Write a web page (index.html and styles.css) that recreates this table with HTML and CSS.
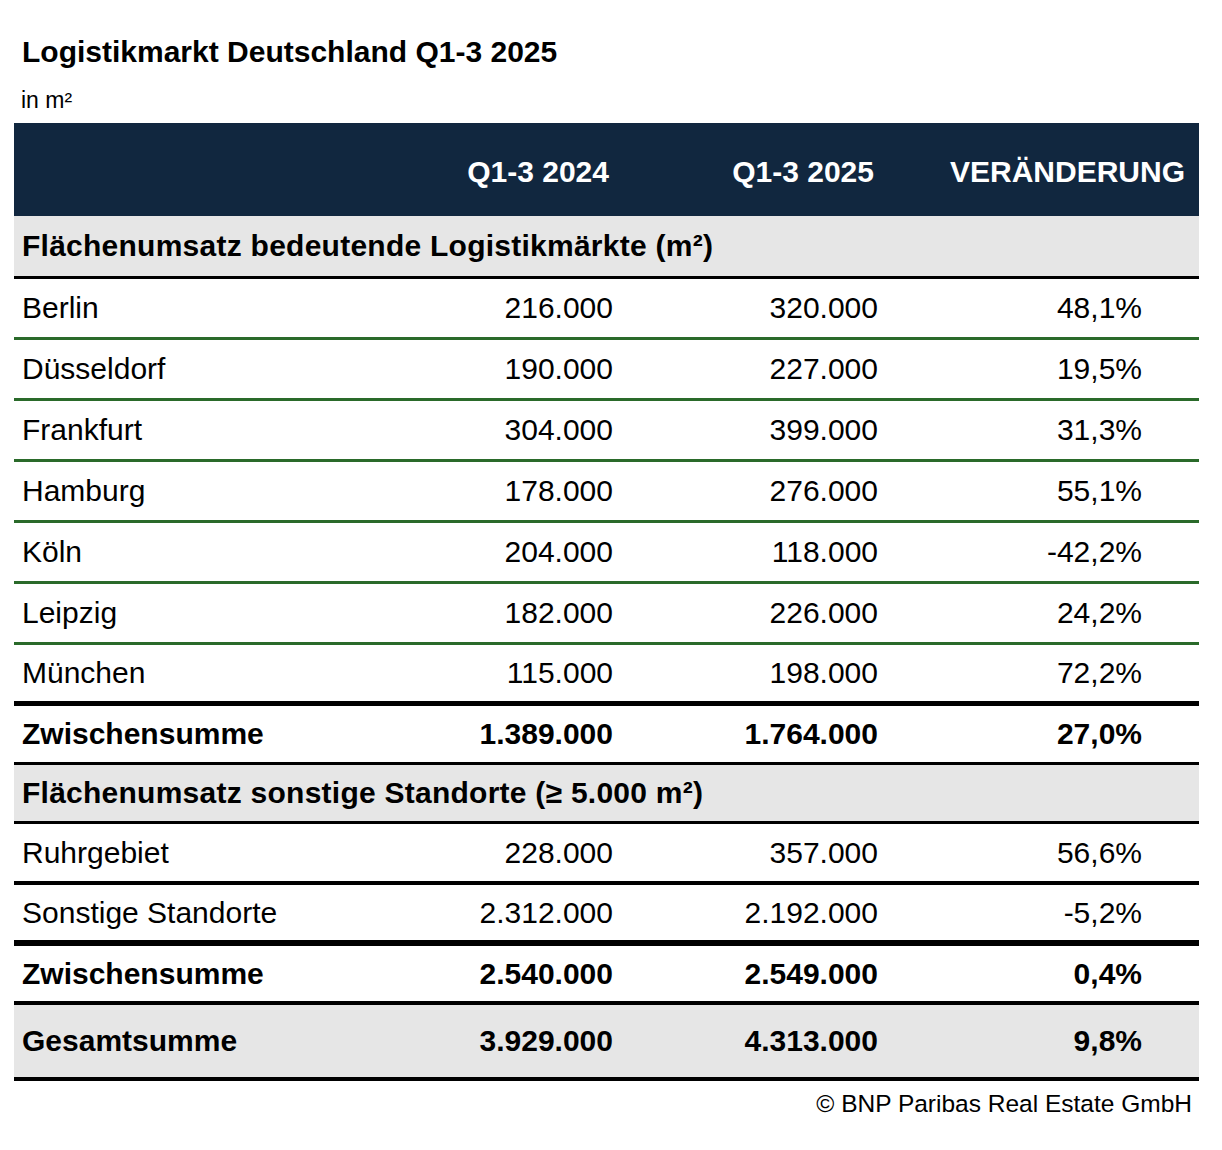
FILE: index.html
```html
<!DOCTYPE html>
<html lang="de">
<head>
    <meta charset="UTF-8">
    <meta name="viewport" content="width=device-width, initial-scale=1.0">
    <title>Logistikmarkt Deutschland Q1-3 2025</title>
    <link rel="stylesheet" href="styles.css">
</head>
<body>
    <div class="container">
        <h1 class="title">Logistikmarkt Deutschland Q1-3 2025</h1>
        <div class="unit">in m²</div>

        <table class="market-table">
            <colgroup>
                <col class="col-label">
                <col class="col-prev">
                <col class="col-curr">
                <col class="col-change">
            </colgroup>
            <thead>
                <tr class="head-row">
                    <th></th>
                    <th class="num">Q1-3 2024</th>
                    <th class="num">Q1-3 2025</th>
                    <th class="num change">VERÄNDERUNG</th>
                </tr>
            </thead>
            <tbody>
                <tr class="section-row">
                    <td colspan="4">Flächenumsatz bedeutende Logistikmärkte (m²)</td>
                </tr>
                <tr class="city-row">
                    <td>Berlin</td><td class="num">216.000</td><td class="num">320.000</td><td class="num change">48,1%</td>
                </tr>
                <tr class="city-row">
                    <td>Düsseldorf</td><td class="num">190.000</td><td class="num">227.000</td><td class="num change">19,5%</td>
                </tr>
                <tr class="city-row">
                    <td>Frankfurt</td><td class="num">304.000</td><td class="num">399.000</td><td class="num change">31,3%</td>
                </tr>
                <tr class="city-row">
                    <td>Hamburg</td><td class="num">178.000</td><td class="num">276.000</td><td class="num change">55,1%</td>
                </tr>
                <tr class="city-row">
                    <td>Köln</td><td class="num">204.000</td><td class="num">118.000</td><td class="num change">-42,2%</td>
                </tr>
                <tr class="city-row">
                    <td>Leipzig</td><td class="num">182.000</td><td class="num">226.000</td><td class="num change">24,2%</td>
                </tr>
                <tr class="city-row last-city">
                    <td>München</td><td class="num">115.000</td><td class="num">198.000</td><td class="num change">72,2%</td>
                </tr>
                <tr class="sum-row">
                    <td>Zwischensumme</td><td class="num">1.389.000</td><td class="num">1.764.000</td><td class="num change">27,0%</td>
                </tr>
                <tr class="section-row second">
                    <td colspan="4">Flächenumsatz sonstige Standorte (≥ 5.000 m²)</td>
                </tr>
                <tr class="other-row">
                    <td>Ruhrgebiet</td><td class="num">228.000</td><td class="num">357.000</td><td class="num change">56,6%</td>
                </tr>
                <tr class="other-row last-other">
                    <td>Sonstige Standorte</td><td class="num">2.312.000</td><td class="num">2.192.000</td><td class="num change">-5,2%</td>
                </tr>
                <tr class="sum-row second">
                    <td>Zwischensumme</td><td class="num">2.540.000</td><td class="num">2.549.000</td><td class="num change">0,4%</td>
                </tr>
                <tr class="total-row">
                    <td>Gesamtsumme</td><td class="num">3.929.000</td><td class="num">4.313.000</td><td class="num change">9,8%</td>
                </tr>
            </tbody>
        </table>

        <div class="source">© BNP Paribas Real Estate GmbH</div>
    </div>
</body>
</html>
```

FILE: styles.css
```css
* {
    box-sizing: border-box;
}

body {
    margin: 0;
    padding: 0;
    font-family: "Liberation Sans", Arial, sans-serif;
    background-color: #fff;
    color: #000;
}

.container {
    width: 1185px;
    margin-left: 14px;
    padding-top: 36px;
}

.title {
    margin: 0;
    padding-left: 8px;
    font-size: 30px;
    line-height: 32px;
    font-weight: bold;
}

.unit {
    margin-top: 20px;
    padding-left: 7px;
    font-size: 23px;
    line-height: 24px;
}

.market-table {
    width: 100%;
    margin-top: 11px;
    border-collapse: separate;
    border-spacing: 0;
    table-layout: fixed;
    font-size: 30px;
}

.col-label { width: 401px; }
.col-prev { width: 200px; }
.col-curr { width: 265px; }
.col-change { width: 319px; }

.market-table th,
.market-table td {
    padding: 0 0 0 8px;
    text-align: left;
    white-space: nowrap;
}

.market-table .num {
    text-align: right;
    padding-right: 2px;
}

.market-table td.change {
    padding-right: 57px;
}

/* header */
.head-row th {
    background-color: #11273f;
    color: #fff;
    font-weight: bold;
    padding-top: 4px;
    line-height: 89px;
}

.head-row th.num {
    padding-right: 6px;
}

.head-row th.change {
    padding-right: 14px;
}

/* section titles */
.section-row td {
    background-color: #e6e6e6;
    font-weight: bold;
    letter-spacing: 0.25px;
    line-height: 60px;
    border-bottom: 3px solid #000;
}

.section-row.second td {
    line-height: 56px;
}

/* city rows */
.city-row td {
    line-height: 58px;
    border-bottom: 3px solid #2a6a2a;
}

.city-row.last-city td {
    line-height: 56px;
    border-bottom: 5px solid #000;
}

/* subtotal rows */
.sum-row td {
    font-weight: bold;
    line-height: 56px;
    border-bottom: 3px solid #000;
}

.sum-row.second td {
    line-height: 55px;
    border-bottom-width: 4px;
}

/* other locations */
.other-row td {
    line-height: 57px;
    border-bottom: 4px solid #000;
}

.other-row.last-other td {
    line-height: 55px;
    border-bottom-width: 6px;
}

/* grand total */
.total-row td {
    background-color: #e6e6e6;
    font-weight: bold;
    line-height: 72px;
    border-bottom: 4px solid #000;
}

.source {
    margin-top: 10px;
    padding-right: 7px;
    text-align: right;
    font-size: 24.5px;
    line-height: 26px;
}
```
